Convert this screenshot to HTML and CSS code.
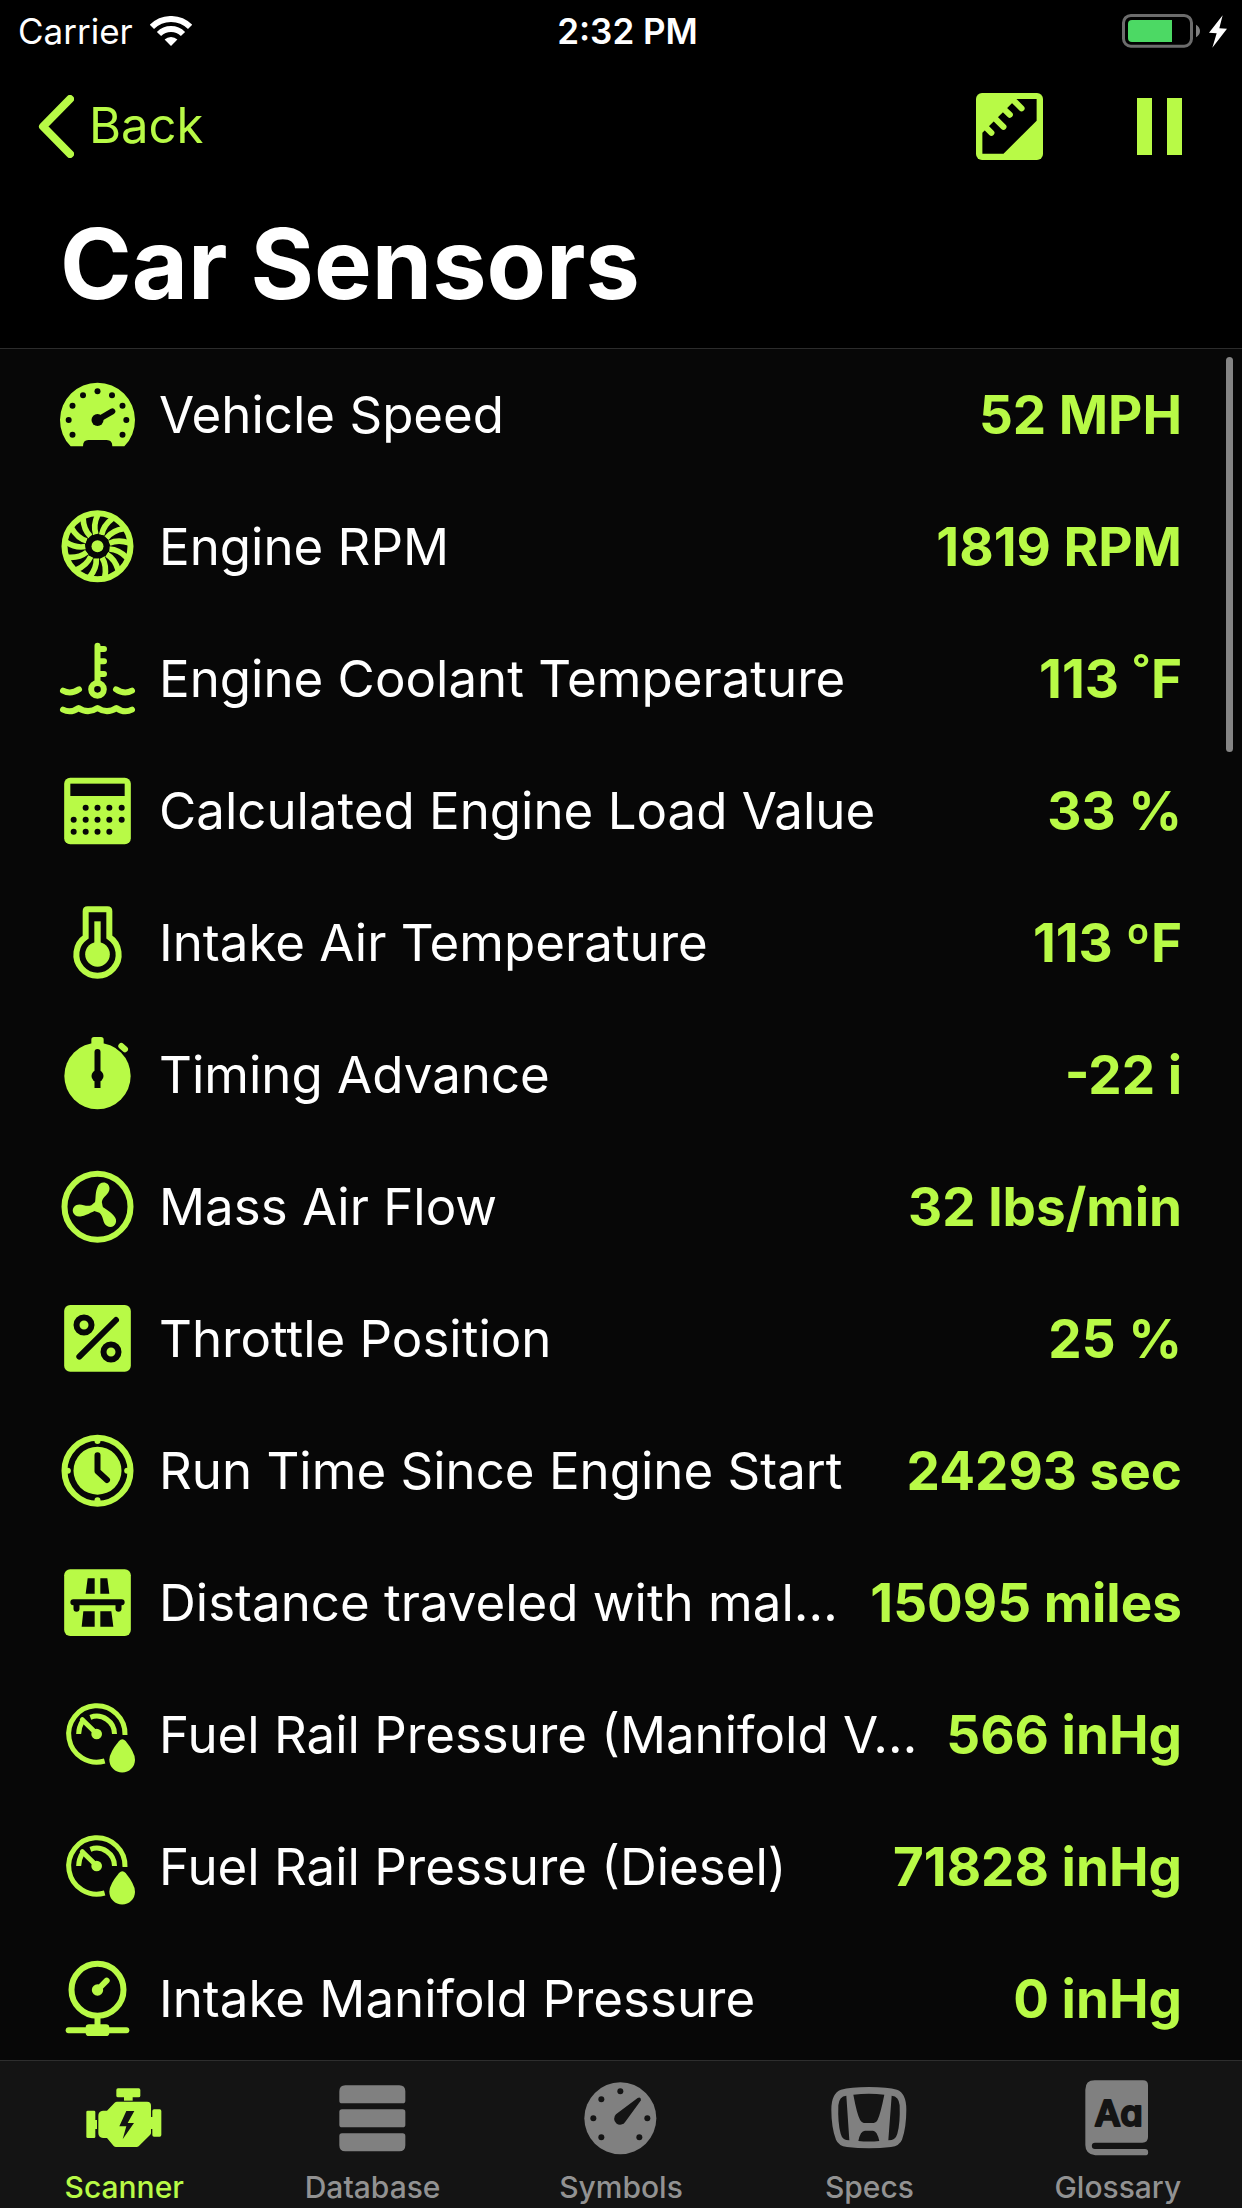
FILE: index.html
```html
<!DOCTYPE html>
<html lang="en">
<head>
<meta charset="utf-8">
<meta name="viewport" content="width=device-width, initial-scale=1">
<title>Car Sensors</title>
<link rel="stylesheet" href="styles.css">
</head>
<body>
<div class="app">
  <header class="header">
    <div class="status">
      <div class="status-left">
        <span class="carrier">Carrier</span>
        <svg class="wifi" viewBox="0 0 42 30" aria-hidden="true"><path class="arc" d="M1.9 10.9A27 27 0 0 1 40.1 10.9M9 18A17 17 0 0 1 33 18"/><path d="M21 30L14.6 23.6A9 9 0 0 1 27.4 23.6Z"/></svg>
      </div>
      <time class="clock">2:32 PM</time>
      <svg class="battery" viewBox="666 39 315 102" aria-hidden="true"><rect class="case" x="670.5" y="43.500" width="204" height="92" rx="22"/><path class="nub" d="M888 71Q900 78 900 90Q900 102 888 109Z"/><path class="charge" d="M816 57V123H696Q684 123 684 111V69Q684 57 696 57Z"/><path class="bolt" d="M968 43L927 95L950 97L937 140L981 83L958 82Z"/></svg>
    </div>
    <div class="navbar">
      <button class="back" type="button">
        <svg class="chevron" viewBox="0 0 36 63" aria-hidden="true"><path d="M32 4L5 31.500L32 59"/></svg>
        <span>Back</span>
      </button>
      <div class="actions">
        <button class="action" type="button" aria-label="Units">
          <svg class="ruler" viewBox="229 276 200 200"><rect x="229" y="276" width="200" height="200" rx="18"/><path class="cut" d="M248 457V395L349 294H410V359L311 457Z"/><path class="tooth" d="M255 375L275 395M284 350L311 377M310 322L330 341M338 295L365 322"/></svg>
        </button>
        <button class="action" type="button" aria-label="Pause">
          <svg class="pause" viewBox="0 0 45 57"><path d="M0 0H15V57H0ZM30 0H45V57H30Z"/></svg>
        </button>
      </div>
    </div>
    <h1 class="title">Car Sensors</h1>
  </header>

  <main class="content">
    <ul class="sensors">
      <li class="row">
        <svg class="icon" viewBox="60 54 225 225" aria-hidden="true"><path d="M92 259A112.500 112.500 0 1 1 253 259H217Q217 240 200 240H145Q129 240 129 259Z"/><g class="cut"><circle cx="97.500" cy="224" r="9"/><circle cx="86" cy="180" r="9"/><circle cx="97.500" cy="137" r="9"/><circle cx="129" cy="105.500" r="9"/><circle cx="172.500" cy="94" r="9"/><circle cx="216" cy="105.500" r="9"/><circle cx="247.500" cy="137" r="9"/><circle cx="259" cy="180" r="9"/><circle cx="247.500" cy="224" r="9"/><circle cx="172.500" cy="180" r="18"/></g><path class="cut-line" d="M172.500 180L217 154"/></svg>
        <span class="name">Vehicle Speed</span><span class="value">52 MPH</span>
      </li>
      <li class="row">
        <svg class="icon" viewBox="60 450 225 225" aria-hidden="true"><circle class="line" cx="172.500" cy="559" r="99"/>
          <g class="line blades" transform="translate(172.500 559)"><path id="blade" d="M-5 -36Q-14 -64 1 -95"/><use href="#blade" transform="rotate(27.700)"/><use href="#blade" transform="rotate(55.400)"/><use href="#blade" transform="rotate(83.100)"/><use href="#blade" transform="rotate(110.800)"/><use href="#blade" transform="rotate(138.500)"/><use href="#blade" transform="rotate(166.200)"/><use href="#blade" transform="rotate(193.800)"/><use href="#blade" transform="rotate(221.500)"/><use href="#blade" transform="rotate(249.200)"/><use href="#blade" transform="rotate(276.900)"/><use href="#blade" transform="rotate(304.600)"/><use href="#blade" transform="rotate(332.300)"/></g>
          <circle class="cut" cx="172.500" cy="559" r="36"/><circle cx="172.500" cy="559" r="18"/></svg>
        <span class="name">Engine RPM</span><span class="value">1819 RPM</span>
      </li>
      <li class="row">
        <svg class="icon" viewBox="60 66 225 225" aria-hidden="true"><path class="line round" d="M172.500 77V182M172.500 87H192M172.500 124H192M172.500 162H192"/><circle class="line" cx="172.500" cy="208" r="19"/><path class="line round" d="M69 212Q92 225 117 208M228 208Q253 225 276 212M69 269Q92 281 116 264Q144 283 172.500 264Q201 283 229 264Q253 281 276 269"/></svg>
        <span class="name">Engine Coolant Temperature</span><span class="value">113 ˚F</span>
      </li>
      <li class="row">
        <svg class="icon" viewBox="60 461 225 225" aria-hidden="true"><rect x="72.500" y="472" width="200" height="200" rx="18"/><rect class="cut" x="91" y="490" width="163" height="37"/><g class="cut"><circle cx="137" cy="562" r="9"/><circle cx="172.500" cy="562" r="9"/><circle cx="208" cy="562" r="9"/><circle cx="245" cy="562" r="9"/><circle cx="101" cy="598" r="9"/><circle cx="137" cy="598" r="9"/><circle cx="172.500" cy="598" r="9"/><circle cx="208" cy="598" r="9"/><circle cx="245" cy="598" r="9"/><circle cx="101" cy="634" r="9"/><circle cx="137" cy="634" r="9"/><circle cx="172.500" cy="634" r="9"/><circle cx="208" cy="634" r="9"/></g></svg>
        <span class="name">Calculated Engine Load Value</span><span class="value">33 %</span>
      </li>
      <li class="row">
        <svg class="icon" viewBox="60 78 225 225" aria-hidden="true"><path class="line" d="M137 171V94Q137 88 143 88H202Q208 88 208 94V171A63.500 63.500 0 1 1 137 171Z"/><circle cx="172.500" cy="223" r="37"/><rect x="163" y="124" width="19" height="80"/></svg>
        <span class="name">Intake Air Temperature</span><span class="value">113 ºF</span>
      </li>
      <li class="row">
        <svg class="icon" viewBox="60 474 225 225" aria-hidden="true"><circle cx="172.500" cy="588" r="99.500"/><rect x="154" y="471" width="37" height="40" rx="8"/><path class="line round" d="M244 498L255 508"/><path class="cut-line" d="M172.500 516V588"/><circle class="cut" cx="172.500" cy="588" r="18"/><rect class="cut" x="163.500" y="588" width="18" height="36"/></svg>
        <span class="name">Timing Advance</span><span class="value">-22 i</span>
      </li>
      <li class="row">
        <svg class="icon" viewBox="60 90 225 225" aria-hidden="true"><circle class="line" cx="172.500" cy="200" r="99"/><g transform="translate(172.500 200)"><path id="vane" d="M-12 -2C-3 -12 -9 -36 -1 -56C6 -80 36 -76 36 -54C35 -36 16 -32 13 -14L16 2L0 12Z"/><use href="#vane" transform="rotate(120)"/><use href="#vane" transform="rotate(240)"/></g></svg>
        <span class="name">Mass Air Flow</span><span class="value">32 lbs/min</span>
      </li>
      <li class="row">
        <svg class="icon" viewBox="60 486 225 225" aria-hidden="true"><rect x="72.500" y="495" width="200" height="200" rx="18"/><path class="cut-line" d="M118 650L228 540"/><circle class="cut-line" cx="132" cy="555" r="22.500"/><circle class="cut-line" cx="213" cy="636" r="22.500"/></svg>
        <span class="name">Throttle Position</span><span class="value">25 %</span>
      </li>
      <li class="row">
        <svg class="icon" viewBox="60 71 225 225" aria-hidden="true"><circle class="line" cx="172.500" cy="181" r="99"/><circle cx="172.500" cy="181" r="72"/><circle cx="172.500" cy="92" r="9"/><circle cx="172.500" cy="270" r="9"/><circle cx="83.500" cy="181" r="9"/><circle cx="261.500" cy="181" r="9"/><path class="cut-line" d="M172.500 135V183L201 209"/></svg>
        <span class="name">Run Time Since Engine Start</span><span class="value">24293 sec</span>
      </li>
      <li class="row">
        <svg class="icon" viewBox="60 468 225 225" aria-hidden="true"><rect x="72.500" y="478" width="200" height="200" rx="18"/><path class="cut" d="M143 505H164V551H137ZM181 505H202L208 551H181ZM130 604H164V650H125ZM181 604H214L220 650H181Z"/><path class="cut-line" d="M100 577H245M109.500 577V596M235.500 577V596"/></svg>
        <span class="name">Distance traveled with mal…</span><span class="value">15095 miles</span>
      </li>
      <li class="row">
        <svg class="icon" viewBox="60 53 225 225" aria-hidden="true"><g id="fuel"><path class="line thin" d="M255 164A84.500 84.500 0 1 0 194 242M223.500 161A53.500 53.500 0 0 0 151 111M116 161Q116 142 127 123"/><path class="line thin round" d="M127 118L170 160"/><circle cx="170" cy="161" r="16"/><path d="M237 182Q247 171 257 182Q285 217 285 238A38.500 38.500 0 0 1 208 238Q208 217 237 182Z"/></g></svg>
        <span class="name">Fuel Rail Pressure (Manifold V…</span><span class="value">566 inHg</span>
      </li>
      <li class="row">
        <svg class="icon" viewBox="60 53 225 225" aria-hidden="true"><use href="#fuel"/></svg>
        <span class="name">Fuel Rail Pressure (Diesel)</span><span class="value">71828 inHg</span>
      </li>
      <li class="row">
        <svg class="icon" viewBox="60 846 225 225" aria-hidden="true"><circle class="line" cx="172.500" cy="929" r="78"/><circle cx="172.500" cy="930" r="17"/><path class="line round" d="M172.500 930L200 902"/><path class="line" d="M172.500 1010V1040"/><rect x="137" y="1033" width="71" height="35" rx="10"/><path class="line round" d="M86 1051H259"/></svg>
        <span class="name">Intake Manifold Pressure</span><span class="value">0 inHg</span>
      </li>
    </ul>
    <div class="thumb" aria-hidden="true"></div>
  </main>

  <nav class="tabs">
    <a class="tab active" href="#scanner" aria-current="page">
      <svg class="icon" viewBox="260 122 225 225" aria-hidden="true"><path d="M320 211L343 187Q346 184 350 184H440Q452 184 452 196V230H456V212Q456 207 461 207H478Q483 207 483 212V284Q483 289 478 289H461Q456 289 456 284V266H452V278Q452 281 449 284L415 318Q412 320 409 320H347Q343 320 340 317L320 293H308Q294 291 294 278V226Q294 213 308 211Z"/><rect x="258" y="211" width="27" height="82" rx="4"/><rect x="283" y="239" width="7" height="27"/><rect x="348" y="144" width="72" height="27" rx="5"/><rect x="371" y="170" width="26" height="11"/><path class="cut" d="M378 212H402L382 248H401L367 297L378 258H357Z"/></svg>
      <span>Scanner</span>
    </a>
    <a class="tab" href="#database">
      <svg class="icon" viewBox="1004 122 225 225" aria-hidden="true"><path d="M1035 135H1197Q1215 135 1215 153V181Q1215 189 1207 189H1025Q1017 189 1017 181V153Q1017 135 1035 135ZM1035 333H1197Q1215 333 1215 315V287Q1215 279 1207 279H1025Q1017 279 1017 287V315Q1017 333 1035 333Z"/><rect x="1017" y="207" width="198" height="54" rx="8"/></svg>
      <span>Database</span>
    </a>
    <a class="tab" href="#symbols">
      <svg class="icon" viewBox="-112 -112 225 225" aria-hidden="true"><circle r="108"/><g class="cut"><circle cx="0" cy="-81" r="9"/><circle cx="-57" cy="-57" r="9"/><circle cx="-81" cy="0" r="9"/><circle cx="-57" cy="57" r="9"/><circle cx="57" cy="57" r="9"/><circle cx="81" cy="0" r="9"/><path d="M-13 -12L52 -61Q62 -66 62 -54L15 10A18 18 0 1 1 -13 -12Z"/></g></svg>
      <span>Symbols</span>
    </a>
    <a class="tab" href="#specs">
      <svg class="icon" viewBox="95 122 225 225" aria-hidden="true"><path d="M206 140Q262 140 290 148Q318 158 318 208Q318 262 305 298Q298 316 272 320Q240 324 206 324Q172 324 140 320Q114 316 107 298Q93 262 93 208Q93 158 122 148Q150 140 206 140Z"/><path class="cut" d="M138 166Q116 168 114 195Q112 250 121 280Q126 300 147 300ZM274 166Q296 168 298 195Q300 250 291 280Q286 300 264 300ZM159 163Q206 158 252 163Q240 222 232 238Q228 248 214 248H196Q184 248 179 238Q170 222 159 163ZM174 302Q180 271 194 271H218Q230 271 237 302Q206 305 174 302Z"/></svg>
      <span>Specs</span>
    </a>
    <a class="tab" href="#glossary">
      <svg class="icon" viewBox="839 122 225 225" aria-hidden="true"><path d="M883 120H1028Q1043 120 1043 135V290Q1043 307 1026 307H884A9.500 9.500 0 0 0 884 326H1034A9.500 9.500 0 0 1 1034 345H885Q855 342 855 314V148Q855 120 883 120Z"/><text class="letters" x="955" y="258" text-anchor="middle">Aa</text></svg>
      <span>Glossary</span>
    </a>
  </nav>
</div>
</body>
</html>
```
FILE: styles.css
```css
:root {
  --accent: #b8fa46;
  --list: #070707;
  --bar: #141414;
  --muted: #808080;
}

* {
  box-sizing: border-box;
}

body {
  margin: 0;
  background: #000;
  color: #fff;
  font-family: Inter, "Liberation Sans", sans-serif;
}

button {
  display: flex;
  align-items: center;
  padding: 0;
  border: 0;
  background: none;
  color: inherit;
  font: inherit;
}

.app {
  display: flex;
  flex-direction: column;
  height: 100vh;
}

/* Header */

.header {
  flex: none;
  border-bottom: 1px solid #2c2c2c;
}

.status {
  display: grid;
  grid-template-columns: 1fr auto 1fr;
  align-items: center;
  height: 60px;
  padding: 2px 15px 0 18px;
  font-size: 35px;
  line-height: 42px;
}

.status-left {
  display: flex;
  align-items: center;
  gap: 17px;
}

.wifi {
  width: 42px;
  height: 30px;
  fill: #fff;
}

.wifi .arc {
  fill: none;
  stroke: #fff;
  stroke-width: 6;
}

.clock {
  padding-left: 10px;
  font-weight: 600;
}

.battery {
  justify-self: end;
  width: 105px;
  height: 34px;
}

.case {
  fill: none;
  stroke: #6c6c6c;
  stroke-width: 9;
}

.nub {
  fill: #808080;
}

.charge {
  fill: #4cd964;
}

.bolt {
  fill: #fff;
}

.navbar {
  display: flex;
  align-items: center;
  justify-content: space-between;
  height: 132px;
  padding: 0 60px 0 38px;
  color: var(--accent);
  fill: var(--accent);
}

.back {
  gap: 15px;
  font-size: 49px;
  line-height: 60px;
}

.chevron {
  width: 36px;
  height: 63px;
  fill: none;
  stroke: var(--accent);
  stroke-width: 8;
  stroke-linecap: round;
  stroke-linejoin: round;
}

.actions {
  display: flex;
  align-items: center;
  gap: 94px;
}

.ruler {
  --cut: #000;
  width: 67px;
  height: 67px;
}

.tooth {
  fill: none;
  stroke: var(--accent);
  stroke-width: 18;
  stroke-linecap: round;
}

.pause {
  width: 45px;
  height: 57px;
}

.title {
  margin: 0;
  padding: 12px 60px 24px;
  font-size: 97px;
  font-weight: 700;
  line-height: 120px;
}

/* Icons */

.icon {
  flex: none;
  width: 75px;
  height: 75px;
  overflow: visible;
  fill: currentColor;
}

.cut {
  fill: var(--cut);
}

.line,
.cut-line {
  fill: none;
  stroke: currentColor;
  stroke-width: 18;
}

.cut-line {
  stroke: var(--cut);
  stroke-linecap: round;
  stroke-linejoin: round;
}

.round {
  stroke-linecap: round;
  stroke-linejoin: round;
}

.thin {
  stroke-width: 15;
}

.blades {
  stroke-width: 17;
}

.letters {
  fill: var(--cut);
  stroke: var(--cut);
  stroke-width: 6;
  stroke-linejoin: round;
  font-size: 108px;
  font-weight: 600;
  font-feature-settings: "cv11";
}

/* Sensor list */

.content {
  --cut: var(--list);
  position: relative;
  flex: 1;
  min-height: 0;
  background: var(--list);
}

.sensors {
  height: 100%;
  margin: 0;
  padding: 0;
  overflow-y: auto;
  scrollbar-width: none;
  list-style: none;
}

.row {
  display: flex;
  align-items: center;
  height: 132px;
  padding: 0 60px;
  font-size: 51px;
  line-height: 64px;
}

.row .icon {
  margin-right: 24px;
  color: var(--accent);
}

.name {
  flex: 1;
  min-width: 0;
  overflow: hidden;
  text-overflow: ellipsis;
  white-space: nowrap;
}

.value {
  margin-left: 8px;
  color: var(--accent);
  font-size: 53px;
  font-weight: 700;
  white-space: nowrap;
}

.thumb {
  position: absolute;
  top: 8px;
  right: 9px;
  width: 7px;
  height: 395px;
  border-radius: 4px;
  background: #858585;
}

/* Tab bar */

.tabs {
  --cut: var(--bar);
  display: grid;
  flex: none;
  grid-template-columns: repeat(5, 1fr);
  border-top: 1px solid #2e2e2e;
  background: var(--bar);
}

.tab {
  display: flex;
  flex-direction: column;
  align-items: center;
  gap: 13px;
  padding: 20px 0 3px;
  color: #929292;
  font-size: 30px;
  font-weight: 500;
  line-height: 36px;
  text-decoration: none;
}

.tab .icon {
  color: var(--muted);
}

.tab.active,
.tab.active .icon {
  color: var(--accent);
}
```
